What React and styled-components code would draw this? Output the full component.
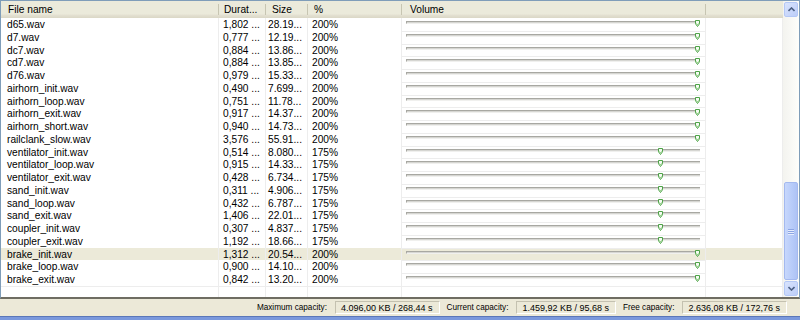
import React from "react";
import styled, { createGlobalStyle } from "styled-components";

const GlobalStyle = createGlobalStyle`
  html, body {
    margin: 0;
    padding: 0;
    background: #ece9d8;
  }
  body {
    font-family: "Liberation Sans", "DejaVu Sans", sans-serif;
    font-size: 10.2px;
    color: #000;
  }
`;

const COLS = "218px 47px 42px 94px 304px 1fr";
const ROW_H = 12.75;

const rows = [
  ["d65.wav", "1,802 ...", "28.19...", 200],
  ["d7.wav", "0,777 ...", "12.19...", 200],
  ["dc7.wav", "0,884 ...", "13.86...", 200],
  ["cd7.wav", "0,884 ...", "13.85...", 200],
  ["d76.wav", "0,979 ...", "15.33...", 200],
  ["airhorn_init.wav", "0,490 ...", "7.699...", 200],
  ["airhorn_loop.wav", "0,751 ...", "11.78...", 200],
  ["airhorn_exit.wav", "0,917 ...", "14.37...", 200],
  ["airhorn_short.wav", "0,940 ...", "14.73...", 200],
  ["railclank_slow.wav", "3,576 ...", "55.91...", 200],
  ["ventilator_init.wav", "0,514 ...", "8.080...", 175],
  ["ventilator_loop.wav", "0,915 ...", "14.33...", 175],
  ["ventilator_exit.wav", "0,428 ...", "6.734...", 175],
  ["sand_init.wav", "0,311 ...", "4.906...", 175],
  ["sand_loop.wav", "0,432 ...", "6.787...", 175],
  ["sand_exit.wav", "1,406 ...", "22.01...", 175],
  ["coupler_init.wav", "0,307 ...", "4.837...", 175],
  ["coupler_exit.wav", "1,192 ...", "18.66...", 175],
  ["brake_init.wav", "1,312 ...", "20.54...", 200],
  ["brake_loop.wav", "0,900 ...", "14.10...", 200],
  ["brake_exit.wav", "0,842 ...", "13.20...", 200],
];
const SELECTED = 18;

const Window = styled.div`
  width: 800px;
  height: 320px;
  display: flex;
  flex-direction: column;
  overflow: hidden;
`;

const ListFrame = styled.div`
  height: 300px;
  box-sizing: border-box;
  border: 1px solid #7f9db9;
  border-bottom: 2px solid #6f6d62;
  background: #fff;
  display: flex;
`;

const Table = styled.div`
  flex: 1;
  display: flex;
  flex-direction: column;
  min-width: 0;
`;

const HeaderRow = styled.div`
  display: grid;
  grid-template-columns: ${COLS};
  height: 17px;
  box-sizing: border-box;
  background: linear-gradient(#ebeadb 0, #ebeadb 13px, #e4e1d2 14px, #dad7c6 17px);
`;

const HeaderCell = styled.div`
  position: relative;
  padding-left: ${(p) => p.$pad}px;
  line-height: 17px;
  white-space: nowrap;
  overflow: hidden;
  &::after {
    content: "";
    position: absolute;
    right: 0;
    top: 3px;
    bottom: 3px;
    width: 1px;
    background: #c7c5b2;
    box-shadow: 1px 0 0 #fff;
    display: ${(p) => (p.$last ? "none" : "block")};
  }
`;

const Row = styled.div`
  display: grid;
  grid-template-columns: ${COLS};
  height: ${ROW_H}px;
  background: ${(p) => (p.$selected ? "#ecead9" : "#fff")};
`;

const Cell = styled.div`
  box-sizing: border-box;
  border-right: 1px solid #ededed;
  border-bottom: 1px solid #ededed;
  padding-left: ${(p) => p.$pad}px;
  padding-top: 1px;
  line-height: ${ROW_H - 1}px;
  white-space: nowrap;
`;

const SliderCell = styled.div`
  position: relative;
  border-right: 1px solid #ededed;
  border-bottom: 1px solid #ededed;
`;

const Filler = styled.div`
  flex: 1;
  display: grid;
  grid-template-columns: ${COLS};
`;

const FillerCell = styled.div`
  border-right: 1px solid #ededed;
`;

const Track = styled.div`
  position: absolute;
  left: 4px;
  width: 294px;
  top: 3px;
  height: 3px;
  box-sizing: border-box;
  border-top: 1px solid #a8a8a2;
  border-left: 1px solid #a8a8a2;
  background: #d6d6d2;
  border-bottom: 1px solid #f0f0ee;
`;

const Thumb = styled.svg`
  position: absolute;
  top: 2px;
  width: 5px;
  height: 7px;
`;

const Slider = ({ value }) => {
  const x = 4 + 1 + (value / 200) * 290;
  return (
    <>
      <Track />
      <Thumb style={{ left: `${x - 2.5}px` }} viewBox="0 0 5 7">
        <path d="M0.5 0.5 H4.5 V3.8 L2.5 6.5 L0.5 3.8 Z" fill="#f4fbf2" stroke="#3c9a36" strokeWidth="0.9" />
        <path d="M1.4 3.4 L2.5 4.8 L3.6 3.4" fill="none" stroke="#79c46a" strokeWidth="0.8" />
      </Thumb>
    </>
  );
};

const ScrollBar = styled.div`
  width: 16px;
  background: linear-gradient(90deg, #f3f3ef, #fefefb);
  display: flex;
  flex-direction: column;
  padding: 1px 0 1px 0;
  box-sizing: border-box;
`;

const ScrollButton = styled.div`
  height: 15px;
  margin: 0 1px;
  border: 1px solid #b4c8f6;
  border-radius: 2px;
  background: linear-gradient(135deg, #d9e4fd, #bccdf9);
  display: flex;
  align-items: center;
  justify-content: center;
  box-sizing: border-box;
`;

const ScrollTrack = styled.div`
  flex: 1;
  display: flex;
  flex-direction: column;
  justify-content: flex-end;
  padding-bottom: 1px;
`;

const ScrollThumb = styled.div`
  height: 98px;
  margin: 0 1px;
  box-sizing: border-box;
  border: 1px solid #a4b9ef;
  border-radius: 2px;
  background: linear-gradient(90deg, #c7d7fc, #b7cbf9 60%, #aec3f5);
  display: flex;
  flex-direction: column;
  align-items: center;
  justify-content: center;
  gap: 1px;
`;

const Grip = styled.div`
  width: 6px;
  height: 1px;
  background: #8ca5e4;
  box-shadow: 0 1px 0 #e6edfd;
`;

const Chevron = ({ up }) => (
  <svg width="7" height="5" viewBox="0 0 7 5">
    <path
      d={up ? "M0.5 4 L3.5 1 L6.5 4" : "M0.5 1 L3.5 4 L6.5 1"}
      fill="none"
      stroke="#4d6185"
      strokeWidth="1.6"
    />
  </svg>
);

const StatusBar = styled.div`
  height: 17px;
  display: flex;
  align-items: center;
  justify-content: flex-end;
  padding-right: 13px;
  background: #ece9d8;
  font-size: 9px;
`;

const StatusLabel = styled.span`
  margin: 0 8px 0 7px;
  font-size: 8.2px;
  color: #000;
`;

const StatusBox = styled.span`
  height: 13px;
  line-height: 12px;
  box-sizing: border-box;
  padding: 0 6px 0 5px;
  border: 1px solid #c4c1b0;
  border-right-color: #fff;
  border-bottom-color: #fff;
  background: #ece9d8;
  white-space: nowrap;
`;

const BottomStrip = styled.div`
  height: 3px;
  background: #7a98dc;
  border-top: 1px solid #5b77b8;
`;

const headers = [
  ["File name", 7],
  ["Durat...", 5],
  ["Size", 6],
  ["%", 6],
  ["Volume", 8],
  ["", 0],
];

export default function App() {
  return (
    <>
      <GlobalStyle />
      <Window>
        <ListFrame>
          <Table>
            <HeaderRow>
              {headers.map(([t, pad], i) => (
                <HeaderCell key={i} $pad={pad} $last={i === headers.length - 1}>
                  {t}
                </HeaderCell>
              ))}
            </HeaderRow>
            {rows.map(([name, dur, size, pct], i) => (
              <Row key={name} $selected={i === SELECTED}>
                <Cell $pad={6}>{name}</Cell>
                <Cell $pad={4}>{dur}</Cell>
                <Cell $pad={2}>{size}</Cell>
                <Cell $pad={4}>{pct}%</Cell>
                <SliderCell>
                  <Slider value={pct} />
                </SliderCell>
                <Cell $pad={0} />
              </Row>
            ))}
            <Filler>
              {headers.map((_, i) => (
                <FillerCell key={i} />
              ))}
            </Filler>
          </Table>
          <ScrollBar>
            <ScrollButton>
              <Chevron up />
            </ScrollButton>
            <ScrollTrack>
              <ScrollThumb>
                <Grip />
                <Grip />
                <Grip />
              </ScrollThumb>
            </ScrollTrack>
            <ScrollButton>
              <Chevron />
            </ScrollButton>
          </ScrollBar>
        </ListFrame>
        <StatusBar>
          <StatusLabel>Maximum capacity:</StatusLabel>
          <StatusBox>4.096,00 KB / 268,44 s</StatusBox>
          <StatusLabel>Current capacity:</StatusLabel>
          <StatusBox>1.459,92 KB / 95,68 s</StatusBox>
          <StatusLabel>Free capacity:</StatusLabel>
          <StatusBox>2.636,08 KB / 172,76 s</StatusBox>
        </StatusBar>
        <BottomStrip />
      </Window>
    </>
  );
}
